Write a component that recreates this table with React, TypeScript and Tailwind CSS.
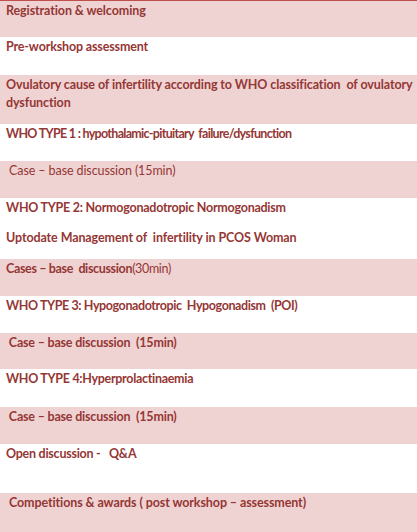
const rows: { h: number; pink: boolean; lines: { text: string; bold?: boolean; extra?: string; tight?: string }[] }[] = [
  { h: 36, pink: true, lines: [{ text: 'Registration & welcoming', bold: true }] },
  { h: 38, pink: false, lines: [{ text: 'Pre-workshop assessment', bold: true, tight: 'tracking-[-0.15px]' }] },
  {
    h: 49,
    pink: true,
    lines: [
      { text: 'Ovulatory cause of infertility according to WHO classification  of ovulatory', bold: true },
      { text: 'dysfunction', bold: true },
    ],
  },
  { h: 37, pink: false, lines: [{ text: 'WHO TYPE 1 : hypothalamic-pituitary  failure/dysfunction', bold: true, tight: 'tracking-[-0.7px]' }] },
  { h: 37, pink: true, lines: [{ text: ' Case – base discussion (15min)' }] },
  { h: 30, pink: false, lines: [{ text: 'WHO TYPE 2: Normogonadotropic Normogonadism', bold: true, tight: 'tracking-[-0.25px]' }] },
  { h: 31, pink: false, lines: [{ text: 'Uptodate Management of  infertility in PCOS Woman', bold: true }] },
  { h: 37, pink: true, lines: [{ text: 'Cases – base  discussion', bold: true, extra: '(30min)', tight: 'tracking-[-0.35px]' }] },
  { h: 37, pink: false, lines: [{ text: 'WHO TYPE 3: Hypogonadotropic  Hypogonadism  (POI)', bold: true, tight: 'tracking-[-0.4px]' }] },
  { h: 36, pink: true, lines: [{ text: ' Case – base discussion  (15min)', bold: true, tight: 'tracking-[-0.2px]' }] },
  { h: 38, pink: false, lines: [{ text: 'WHO TYPE 4:Hyperprolactinaemia', bold: true, tight: 'tracking-[-0.3px]' }] },
  { h: 37, pink: true, lines: [{ text: ' Case – base discussion  (15min)', bold: true, tight: 'tracking-[-0.2px]' }] },
  { h: 49, pink: false, lines: [{ text: 'Open discussion -   Q&A', bold: true, tight: 'tracking-[-0.25px]' }] },
  { h: 40, pink: true, lines: [{ text: ' Competitions & awards ( post workshop – assessment)', bold: true }] },
]

export default function App() {
  return (
    <div className="w-[417px] h-[532px] overflow-hidden bg-white border-t border-[#c0504d] font-['Lato','Open_Sans',sans-serif] text-[12.5px] tracking-[-0.1px] leading-[18px] text-[#953735]">
      {rows.map((row, i) => (
        <div
          key={i}
          className={row.pink ? 'bg-[#efd3d3] pl-[6px] pt-[1px]' : 'bg-white pl-[6px] pt-[1px]'}
          style={{ height: row.h }}
        >
          {row.lines.map((line, j) => (
            <div
              key={j}
              className={(line.bold ? 'font-bold whitespace-pre ' : 'font-normal whitespace-pre ') + (line.tight ?? '')}
            >
              {line.text}
              {line.extra && <span className="font-normal">{line.extra}</span>}
            </div>
          ))}
        </div>
      ))}
    </div>
  )
}
